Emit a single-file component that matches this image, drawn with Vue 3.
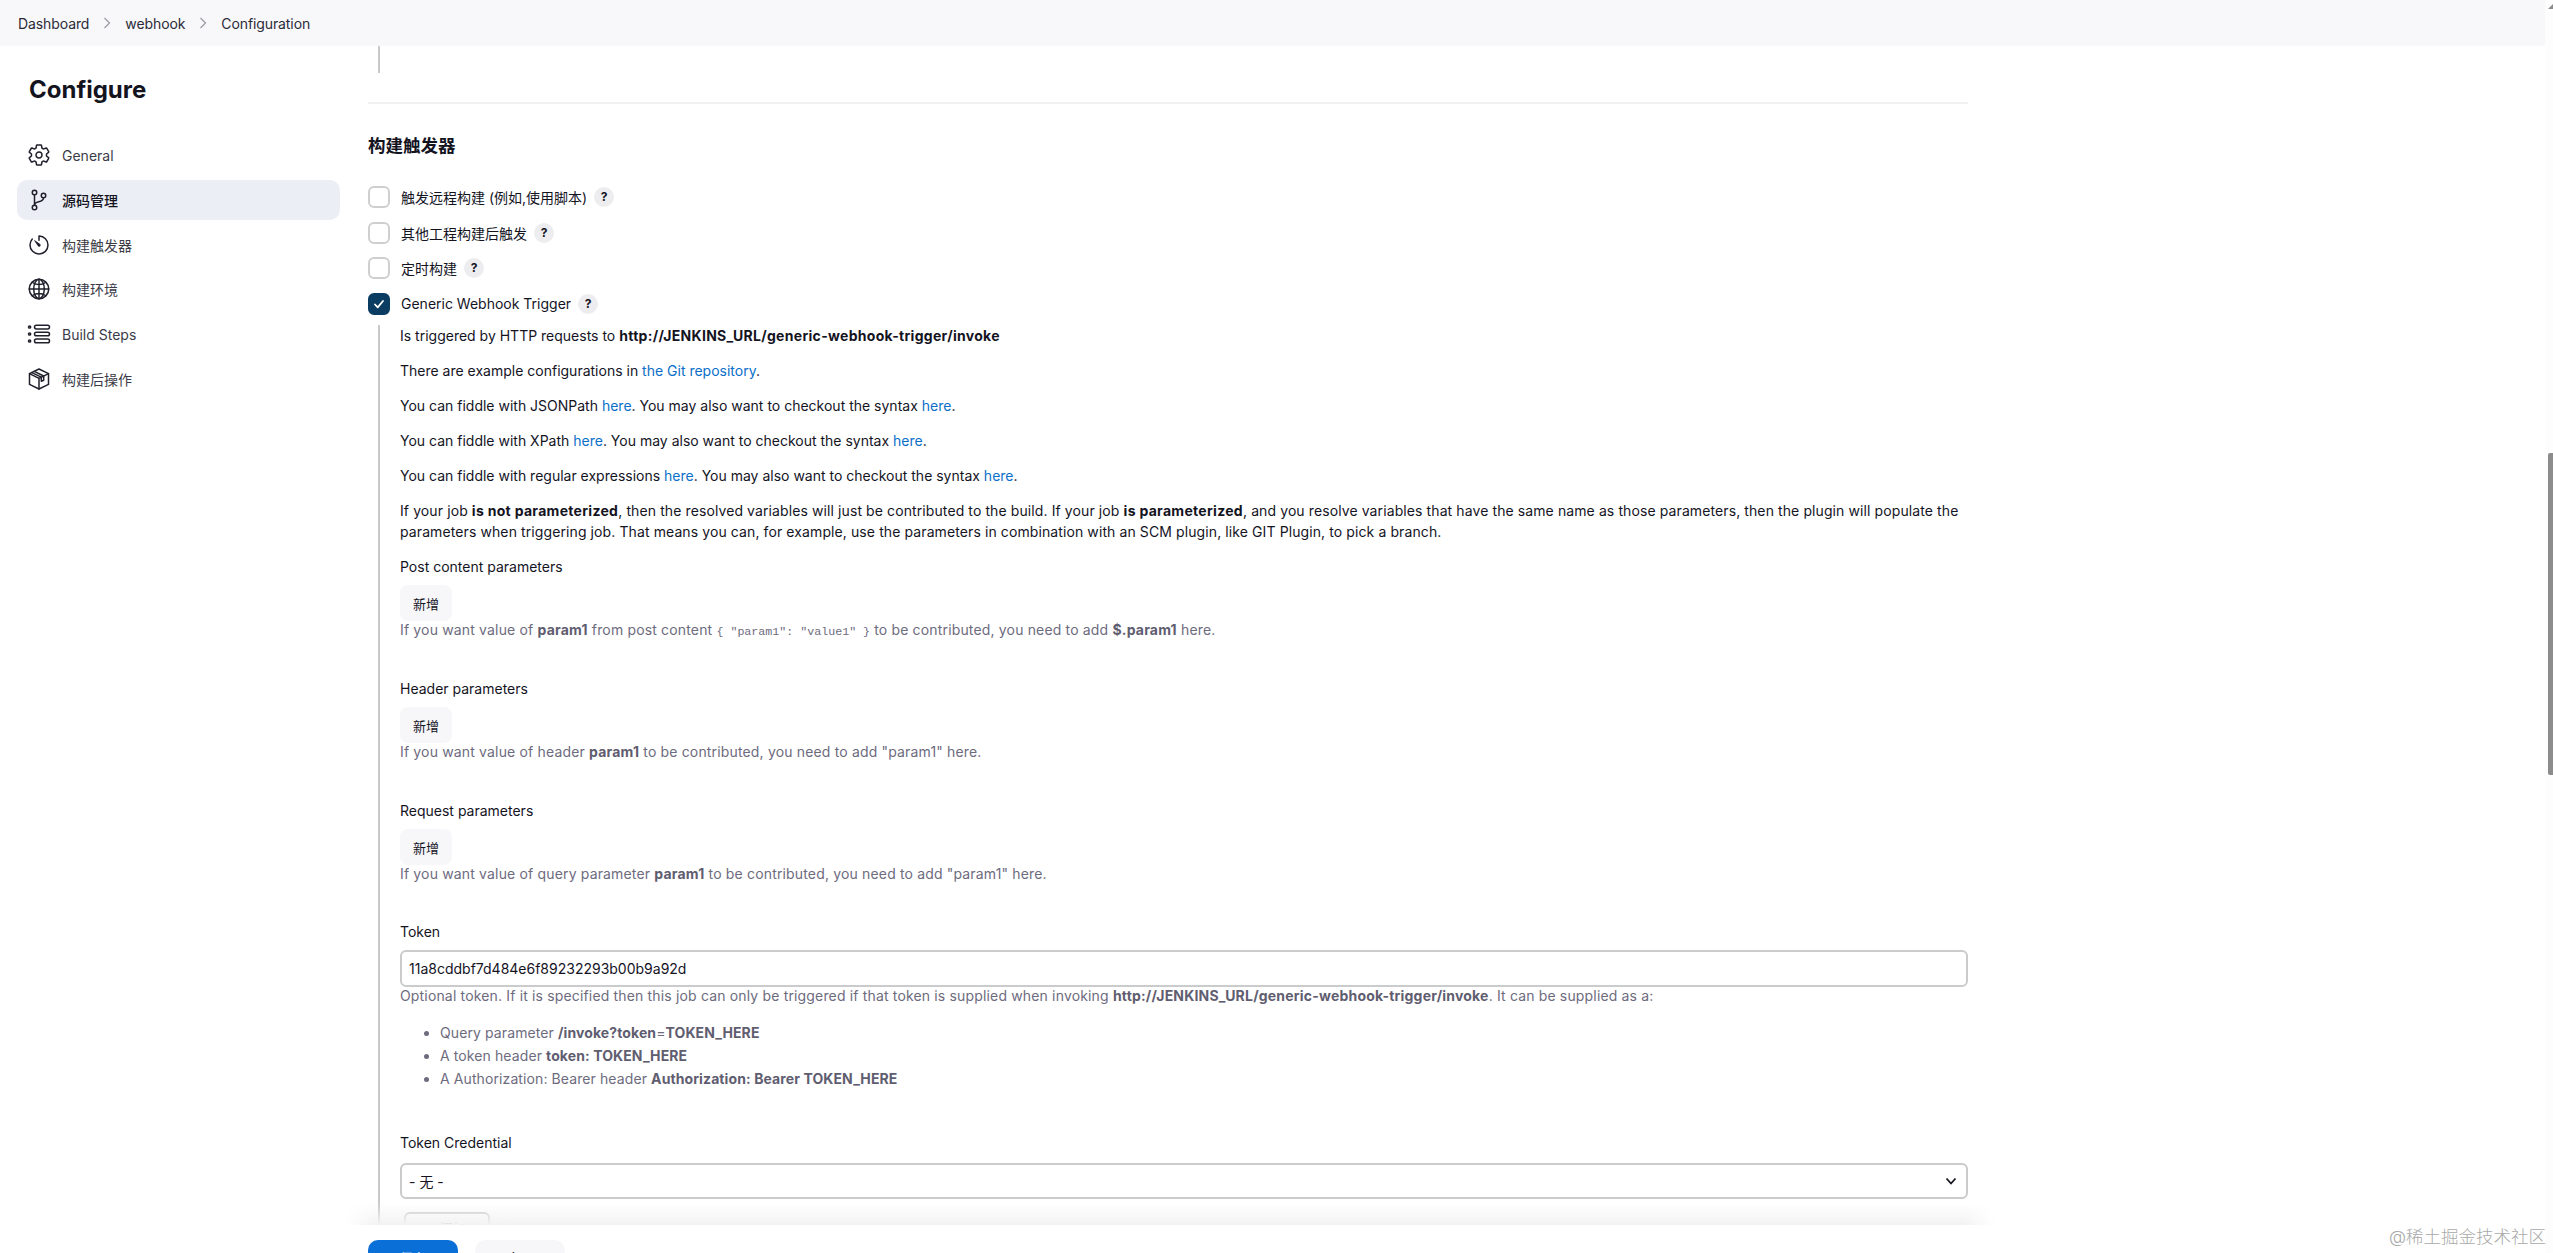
<template>
  <div class="page">
    <header class="topbar">
      <template v-for="(crumb, i) in crumbs" :key="crumb">
        <svg v-if="i" class="crumb-sep" viewBox="0 0 10 14" width="10" height="14"><path d="M2.5 2l5 5-5 5" /></svg>
        <span class="crumb">{{ crumb }}</span>
      </template>
    </header>

    <div class="body">
      <aside class="sidebar">
        <h1 class="title">Configure</h1>
        <nav class="nav">
          <div v-for="item in navItems" :key="item.label" class="nav-item" :class="{ active: item.active }">
            <svg class="nav-icon" :viewBox="item.box" width="24" height="24" v-html="item.icon"></svg>
            <span>{{ item.label }}</span>
          </div>
        </nav>
      </aside>

      <main class="main">
        <div class="stub"></div>
        <hr class="divider" />
        <h2 class="section-title">构建触发器</h2>

        <div class="triggers">
          <div v-for="t in triggers" :key="t.label" class="trigger">
            <span class="check" :class="{ on: t.on }">
              <svg v-if="t.on" viewBox="0 0 14 14" width="14" height="14"><path d="M3 7.5l2.7 2.8L11 4" /></svg>
            </span>
            <span>{{ t.label }}</span>
            <span class="help-dot">?</span>
          </div>
        </div>

        <div class="nested">
          <p>Is triggered by HTTP requests to <b>http://JENKINS_URL/generic-webhook-trigger/invoke</b></p>
          <p>There are example configurations in <a>the Git repository</a>.</p>
          <p>You can fiddle with JSONPath <a>here</a>. You may also want to checkout the syntax <a>here</a>.</p>
          <p>You can fiddle with XPath <a>here</a>. You may also want to checkout the syntax <a>here</a>.</p>
          <p>You can fiddle with regular expressions <a>here</a>. You may also want to checkout the syntax <a>here</a>.</p>
          <p class="long">If your job <b>is not parameterized</b>, then the resolved variables will just be contributed to the build. If your job <b>is parameterized</b>, and you resolve variables that have the same name as those parameters, then the plugin will populate the parameters when triggering job. That means you can, for example, use the parameters in combination with an SCM plugin, like GIT Plugin, to pick a branch.</p>

          <section class="param">
            <div class="label">Post content parameters</div>
            <button class="add">新增</button>
            <div class="hint">If you want value of <b>param1</b> from post content <code>{ "param1": "value1" }</code> to be contributed, you need to add <b>$.param1</b> here.</div>
          </section>
          <section class="param">
            <div class="label">Header parameters</div>
            <button class="add">新增</button>
            <div class="hint">If you want value of header <b>param1</b> to be contributed, you need to add "param1" here.</div>
          </section>
          <section class="param tight">
            <div class="label">Request parameters</div>
            <button class="add">新增</button>
            <div class="hint">If you want value of query parameter <b>param1</b> to be contributed, you need to add "param1" here.</div>
          </section>

          <section class="param token">
            <div class="label">Token</div>
            <input class="field" value="11a8cddbf7d484e6f89232293b00b9a92d" />
            <div class="hint">Optional token. If it is specified then this job can only be triggered if that token is supplied when invoking <b>http://JENKINS_URL/generic-webhook-trigger/invoke</b>. It can be supplied as a:</div>
            <ul class="hint-list">
              <li>Query parameter <b>/invoke?token</b>=<b>TOKEN_HERE</b></li>
              <li>A token header <b>token: TOKEN_HERE</b></li>
              <li>A Authorization: Bearer header <b>Authorization: Bearer TOKEN_HERE</b></li>
            </ul>
          </section>

          <section class="credential">
            <div class="label">Token Credential</div>
            <div class="field select">
              <span>- 无 -</span>
              <svg viewBox="0 0 14 14" width="14" height="14"><path d="M2.5 4.5L7 9.5l4.5-5" /></svg>
            </div>
            <button class="add-cred">+ 添加</button>
          </section>
        </div>
      </main>
    </div>

    <div class="bottom-bar">
      <div class="bar-fade"></div>
      <button class="btn primary">保存</button>
      <button class="btn">应用</button>
    </div>

    <div class="scrollbar">
      <span class="scroll-arrow"></span>
      <span class="scroll-thumb"></span>
    </div>
    <div class="watermark">@稀土掘金技术社区</div>
  </div>
</template>

<script setup>
const crumbs = ['Dashboard', 'webhook', 'Configuration']

const s = 'fill="none" stroke="currentColor" stroke-width="32" stroke-linecap="round" stroke-linejoin="round"'
const s24 = 'fill="none" stroke="currentColor" stroke-width="1.5" stroke-linecap="round" stroke-linejoin="round"'

const gear = `<path ${s} d="M262.29 192.31a64 64 0 1057.4 57.4 64.3 64.3 0 00-57.4-57.4zM416.39 256a154.34 154.34 0 01-1.53 20.79l45.21 35.46a10.81 10.81 0 012.45 13.75l-42.77 74a10.81 10.81 0 01-13.14 4.59l-44.9-18.08a16.11 16.11 0 00-15.17 1.75A164.48 164.48 0 01325 400.8a15.94 15.94 0 00-8.82 12.14l-6.73 47.89a11.08 11.08 0 01-10.68 9.17h-85.54a11.11 11.11 0 01-10.69-8.87l-6.72-47.82a16.07 16.07 0 00-9-12.22 155.3 155.3 0 01-21.46-12.57 16 16 0 00-15.11-1.71l-44.89 18.07a10.81 10.81 0 01-13.14-4.58l-42.77-74a10.8 10.8 0 012.45-13.75l38.21-30a16.05 16.05 0 006-14.08c-.36-4.17-.58-8.33-.58-12.5s.21-8.27.58-12.35a16 16 0 00-6.07-13.94l-38.19-30A10.81 10.81 0 0149.48 186l42.77-74a10.81 10.81 0 0113.14-4.59l44.9 18.08a16.11 16.11 0 0015.17-1.75A164.48 164.48 0 01187 111.2a15.94 15.94 0 008.82-12.14l6.73-47.89A11.08 11.08 0 01213.23 42h85.54a11.11 11.11 0 0110.69 8.87l6.72 47.82a16.07 16.07 0 009 12.22 155.3 155.3 0 0121.46 12.57 16 16 0 0015.11 1.71l44.89-18.07a10.81 10.81 0 0113.14 4.58l42.77 74a10.8 10.8 0 01-2.45 13.75l-38.21 30a16.05 16.05 0 00-6.05 14.08c.33 4.14.55 8.3.55 12.47z"/>`
const branch = `<g ${s}><circle cx="160" cy="96" r="48"/><circle cx="160" cy="416" r="48"/><path d="M160 368V144"/><circle cx="352" cy="160" r="48"/><path d="M352 208c0 128-192 48-192 160"/></g>`
const timer = `<path ${s} d="M112.91 128A191.85 191.85 0 0064 254c-1.18 106.35 85.65 193.8 192 194 106.2.2 192-85.83 192-192 0-104.54-83.55-189.61-187.51-192a4.36 4.36 0 00-4.49 4.37V152"/><path fill="currentColor" d="M233.38 278.63l-79-113a8.13 8.13 0 0111.32-11.32l113 79a32.5 32.5 0 01-37 53.34 33.21 33.21 0 01-8.32-8.02z"/>`
const globe = `<g ${s}><path d="M256 48C141.13 48 48 141.13 48 256s93.13 208 208 208 208-93.13 208-208S370.87 48 256 48z"/><path d="M256 48c-58.07 0-112.67 93.13-112.67 208S197.93 464 256 464s112.67-93.13 112.67-208S314.07 48 256 48z"/><path d="M117.33 117.33c38.24 27.15 86.38 43.34 138.67 43.34s100.43-16.19 138.67-43.34M394.67 394.67c-38.24-27.15-86.38-43.34-138.67-43.34s-100.43 16.19-138.67 43.34M256 48v416M464 256H48"/></g>`
const steps = `<g ${s24}><rect x="7.5" y="3.3" width="15" height="3.6" rx="1.8"/><rect x="7.5" y="10.2" width="15" height="3.6" rx="1.8"/><rect x="7.5" y="17.1" width="15" height="3.6" rx="1.8"/><circle cx="2.6" cy="5" r="1.1"/><circle cx="2.6" cy="12" r="1.1"/><circle cx="2.6" cy="19" r="1.1"/></g>`
const box = `<g ${s24}><path d="M12 2l9.5 4.6v10.8L12 22l-9.5-4.6V6.6z"/><path d="M2.5 6.6L12 11.3l9.5-4.7M12 11.3V22"/><path d="M7.3 4.4l9.4 4.6v4.2l-2.4 1V10.2L4.9 5.6"/></g>`

const navItems = [
  { label: 'General', icon: gear, box: '0 0 512 512' },
  { label: '源码管理', icon: branch, box: '0 0 512 512', active: true },
  { label: '构建触发器', icon: timer, box: '0 0 512 512' },
  { label: '构建环境', icon: globe, box: '0 0 512 512' },
  { label: 'Build Steps', icon: steps, box: '0 0 24 24' },
  { label: '构建后操作', icon: box, box: '0 0 24 24' },
]

const triggers = [
  { label: '触发远程构建 (例如,使用脚本)' },
  { label: '其他工程构建后触发' },
  { label: '定时构建' },
  { label: 'Generic Webhook Trigger', on: true },
]
</script>

<style>
html, body { margin: 0; background: #fff; overflow: hidden; }
</style>

<style scoped>
.page {
  position: relative;
  width: 2553px;
  height: 1253px;
  overflow: hidden;
  background: #fff;
  color: #14141f;
  font-family: Inter, "Noto Sans CJK SC", sans-serif;
  font-size: 14px;
}
.topbar {
  height: 46px;
  padding-left: 18px;
  display: flex;
  align-items: center;
  gap: 13px;
  background: #f8f8fa;
  color: #2b2b38;
}
.crumb-sep { fill: none; stroke: #9a9aa3; stroke-width: 1.2; }
.crumb { letter-spacing: -0.1px; }

.body { display: flex; }
.sidebar { width: 340px; padding-left: 17px; flex: none; box-sizing: border-box; }
.title {
  margin: 27px 0 28px 12px;
  font-size: 24px;
  line-height: 34px;
  font-weight: 700;
}
.nav { display: flex; flex-direction: column; gap: 4.8px; }
.nav-item {
  height: 40px;
  padding-left: 10px;
  display: flex;
  align-items: center;
  gap: 11px;
  border-radius: 10px;
  color: #3c3c48;
}
.nav-item.active { background: #eceef5; color: #14141f; font-weight: 500; }
.nav-icon { flex: none; color: #20202c; }

.main { width: 1600px; margin-left: 28px; flex: none; }
.stub { width: 2px; height: 27px; margin-left: 10px; background: #c9c9cc; }
.divider { height: 2px; margin: 29px 0 0; border: 0; background: #f1f1f3; }
.section-title { margin: 30px 0 28px; font-size: 17.5px; line-height: 24px; font-weight: 700; }

.triggers { display: flex; flex-direction: column; gap: 13.6px; }
.trigger { height: 22px; display: flex; align-items: center; }
.check {
  width: 22px;
  height: 22px;
  margin-right: 11px;
  box-sizing: border-box;
  border: 2px solid #cfcfd2;
  border-radius: 6px;
  display: flex;
  align-items: center;
  justify-content: center;
}
.check.on { background: #0b3d62; border-color: #0b3d62; }
.check svg { fill: none; stroke: #fff; stroke-width: 1.8; stroke-linecap: round; stroke-linejoin: round; }
.help-dot {
  width: 20px;
  height: 20px;
  margin-left: 7px;
  border-radius: 50%;
  background: #ededef;
  font-size: 12px;
  font-weight: 700;
  line-height: 20px;
  text-align: center;
}

.nested {
  margin: 10px 0 0 10px;
  padding: 0 0 60px 20px;
  border-left: 2px solid #c9c9cc;
}
.nested p { margin: 0 0 14px; line-height: 21px; }
.nested .long { letter-spacing: 0.1px; }
.nested a { color: #0b6fc9; }
.nested b { font-weight: 700; }
.nested p b { letter-spacing: 0.3px; }

.label { line-height: 21px; margin-bottom: 8.5px; }
.param { margin-bottom: 38.5px; }
.param.tight { margin-bottom: 37.5px; }
.param.token { margin-bottom: 42px; }
.add {
  display: block;
  width: 52px;
  height: 36px;
  padding: 0;
  border: 0;
  border-radius: 8px;
  background: #f7f7f9;
  color: #14141f;
  font: inherit;
  font-size: 13px;
}
.hint { color: #6d6b7e; line-height: 18px; letter-spacing: 0.16px; }
.hint b { color: #5f5d70; letter-spacing: 0.2px; }
.hint code { font-family: "Liberation Mono", monospace; font-size: 11.65px; line-height: 0; letter-spacing: 0; }
.hint-list { margin: 16px 0 0; padding: 0 0 0 40px; color: #6d6b7e; line-height: 23px; letter-spacing: 0.1px; }
.hint-list b { color: #5f5d70; }
.field {
  display: flex;
  width: 1568px;
  height: 37px;
  box-sizing: border-box;
  border: 2px solid #c9cbcc;
  border-radius: 6px;
  padding: 0 7px;
  background: #fff;
  color: #14141f;
  font: inherit;
  outline: none;
}
.select { align-items: center; justify-content: space-between; height: 36px; padding-right: 8px; }
.select svg { fill: none; stroke: #14141f; stroke-width: 1.8; }
.credential .label { margin-bottom: 9.5px; }
.add-cred {
  display: block;
  width: 86px;
  height: 32px;
  margin: 13px 0 0 4px;
  border: 2px solid #c9c9cc;
  border-radius: 6px;
  background: #fff;
  color: #14141f;
  font: inherit;
  font-size: 13px;
}

.bottom-bar {
  position: absolute;
  left: 0;
  right: 0;
  top: 1225px;
  height: 60px;
  padding: 15px 0 0 368px;
  box-sizing: border-box;
  display: flex;
  align-items: flex-start;
  gap: 17px;
  background: #fff;
}
.bar-fade {
  position: absolute;
  left: 345px;
  width: 1650px;
  top: -22px;
  height: 22px;
  background: linear-gradient(#ffffff00, #f3f3f4);
  -webkit-mask-image: linear-gradient(90deg, transparent, #000 30px, #000 1620px, transparent);
  mask-image: linear-gradient(90deg, transparent, #000 30px, #000 1620px, transparent);
}
.btn {
  width: 90px;
  height: 36px;
  border: 0;
  border-radius: 10px;
  background: #f7f7f9;
  color: #14141f;
  font: inherit;
  font-weight: 500;
}
.btn.primary { background: #0b6fd8; color: #fff; }

.scrollbar {
  position: absolute;
  top: 0;
  right: 0;
  width: 8px;
  height: 100%;
  background: #fdfdfd;
}
.scroll-arrow {
  position: absolute;
  top: 4px;
  right: 0;
  border-left: 5px solid transparent;
  border-bottom: 5px solid #8c8c8c;
}
.scroll-thumb {
  position: absolute;
  top: 453px;
  right: 0;
  width: 5px;
  height: 322px;
  border-radius: 2px 0 0 2px;
  background: #8c8c8c;
}
.watermark {
  position: absolute;
  right: 7px;
  bottom: 4px;
  color: #a9a9a9;
  font-size: 17.5px;
  line-height: 24px;
  font-weight: 300;
}
</style>
